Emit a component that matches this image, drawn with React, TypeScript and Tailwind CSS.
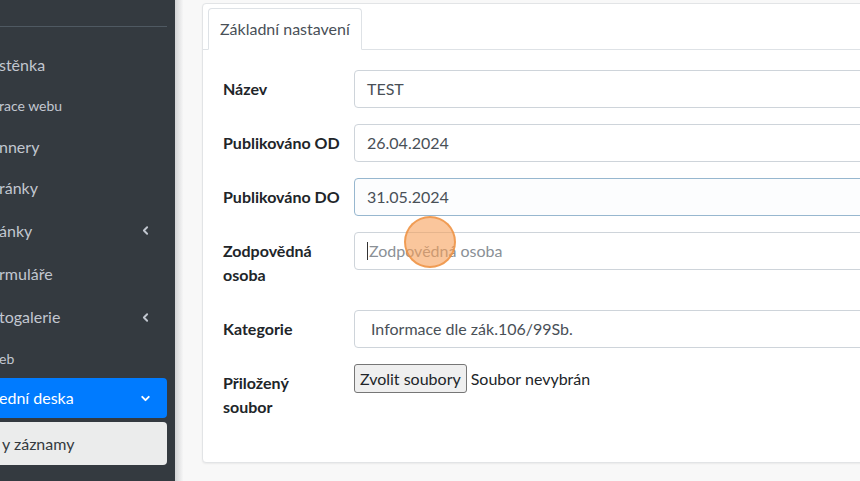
import React from 'react'
import { ChevronLeft, ChevronDown } from 'lucide-react'

type NavItem = {
  label: string
  h: string
  small?: boolean
  arrow?: boolean
}

// the sidebar is cut off on the left in the screenshot, so only the visible part of each label is shown
const navItems: NavItem[] = [
  { label: 'stěnka', h: 'h-[40px]' },
  { label: 'race webu', h: 'h-[41px]', small: true },
  { label: 'nnery', h: 'h-[41px]' },
  { label: 'ránky', h: 'h-[42px]' },
  { label: 'ánky', h: 'h-[43px]', arrow: true },
  { label: 'rmuláře', h: 'h-[44px]' },
  { label: 'togalerie', h: 'h-[42px]', arrow: true },
  { label: 'eb', h: 'h-[40px]', small: true }
]

function Sidebar() {
  return (
    <aside className="w-[175px] shrink-0 bg-[#343a40] overflow-hidden flex flex-col">
      <div className="h-[27px] border-b border-[#4f5962] w-[167px]" />
      <div className="h-[18px]" />
      {navItems.map((item) => (
        <div
          key={item.label}
          className={`${item.h} w-[167px] flex items-center justify-between pr-[15px] text-[#c2c7d0]`}
        >
          <span className={`-ml-[1px] ${item.small ? 'text-[14px]' : 'text-[16px]'}`}>{item.label}</span>
          {item.arrow && <ChevronLeft size={13} strokeWidth={3.5} className="text-[#c2c7d0]" />}
        </div>
      ))}
      <div className="h-[40px] w-[167px] rounded-r-[4px] bg-[#007bff] flex items-center justify-between pr-[15px] text-white">
        <span className="-ml-[1px] text-[16px]">ední deska</span>
        <ChevronDown size={13} strokeWidth={3.5} />
      </div>
      <div className="h-[4px]" />
      <div className="h-[43px] w-[167px] rounded-r-[4px] bg-[#ebecec] flex items-center text-[#343a40]">
        <span className="ml-[2px] text-[16px]">y záznamy</span>
      </div>
    </aside>
  )
}

function FormRow({ label, children }: { label: React.ReactNode; children: React.ReactNode }) {
  return (
    <div className="flex mb-4">
      <div className="w-[131px] shrink-0 py-[7px] text-[16px] leading-6 font-bold text-[#212529]">{label}</div>
      <div className="flex-1">{children}</div>
    </div>
  )
}

const inputCls = 'h-[38px] w-full rounded-[4px] border px-3 flex items-center text-[16px] text-[#495057]'

export default function App() {
  return (
    <div
      className="relative flex h-[481px] w-[860px] overflow-hidden bg-[#f8f8f8]"
      style={{ fontFamily: 'Lato, "Noto Sans", sans-serif' }}
    >
      <Sidebar />
      <div className="w-[8px] shrink-0 bg-linear-to-r from-[#d2d3d5] to-[#f6f6f6]" />

      <main className="flex-1 overflow-hidden pl-[19px] pt-[3px]">
        <div className="w-[720px] rounded-[4px] border border-[#e2e4e6] bg-white shadow-[0_1px_2px_rgba(0,0,0,0.06)]">
          {/* tabs */}
          <div className="flex border-b border-[#dee2e6] pl-[5px] pt-[4px]">
            <div className="-mb-px h-[42px] rounded-t-[4px] border border-b-white border-[#dee2e6] bg-white px-[11px] flex items-center text-[16px] text-[#495057]">
              Základní nastavení
            </div>
          </div>

          <div className="px-5 pt-5 pb-5">
            <FormRow label="Název">
              <div className={`${inputCls} border-[#ced4da]`}>TEST</div>
            </FormRow>
            <FormRow label="Publikováno OD">
              <div className={`${inputCls} border-[#ced4da]`}>26.04.2024</div>
            </FormRow>
            <FormRow label="Publikováno DO">
              <div className={`${inputCls} border-[#97b7cf] bg-[#fcfdfe]`}>31.05.2024</div>
            </FormRow>
            <FormRow
              label={
                <>
                  Zodpovědná
                  <br />
                  osoba
                </>
              }
            >
              <div className={`${inputCls} border-[#ced4da]`}>
                <span className="mr-[1px] h-[18px] w-px bg-[#333]" />
                <span className="text-[#8a9096]">Zodpovědná osoba</span>
              </div>
            </FormRow>
            <FormRow label="Kategorie">
              <div className={`${inputCls} border-[#ced4da] pl-4`}>Informace dle zák.106/99Sb.</div>
            </FormRow>
            <FormRow
              label={
                <>
                  Přiložený
                  <br />
                  soubor
                </>
              }
            >
              <div className="flex items-center text-[16px] text-[#212529]">
                <button className="h-[29px] rounded-[3px] border border-[#767676] bg-[#efefef] px-[5px] text-[16px] text-[#212529]">
                  Zvolit soubory
                </button>
                <span className="ml-[4px]">Soubor nevybrán</span>
              </div>
            </FormRow>
          </div>
        </div>
      </main>

      {/* click indicator */}
      <div className="absolute left-[404px] top-[216px] h-[52px] w-[52px] rounded-full border-2 border-[rgba(236,141,60,0.75)] bg-[rgba(246,160,90,0.6)]" />
    </div>
  )
}
